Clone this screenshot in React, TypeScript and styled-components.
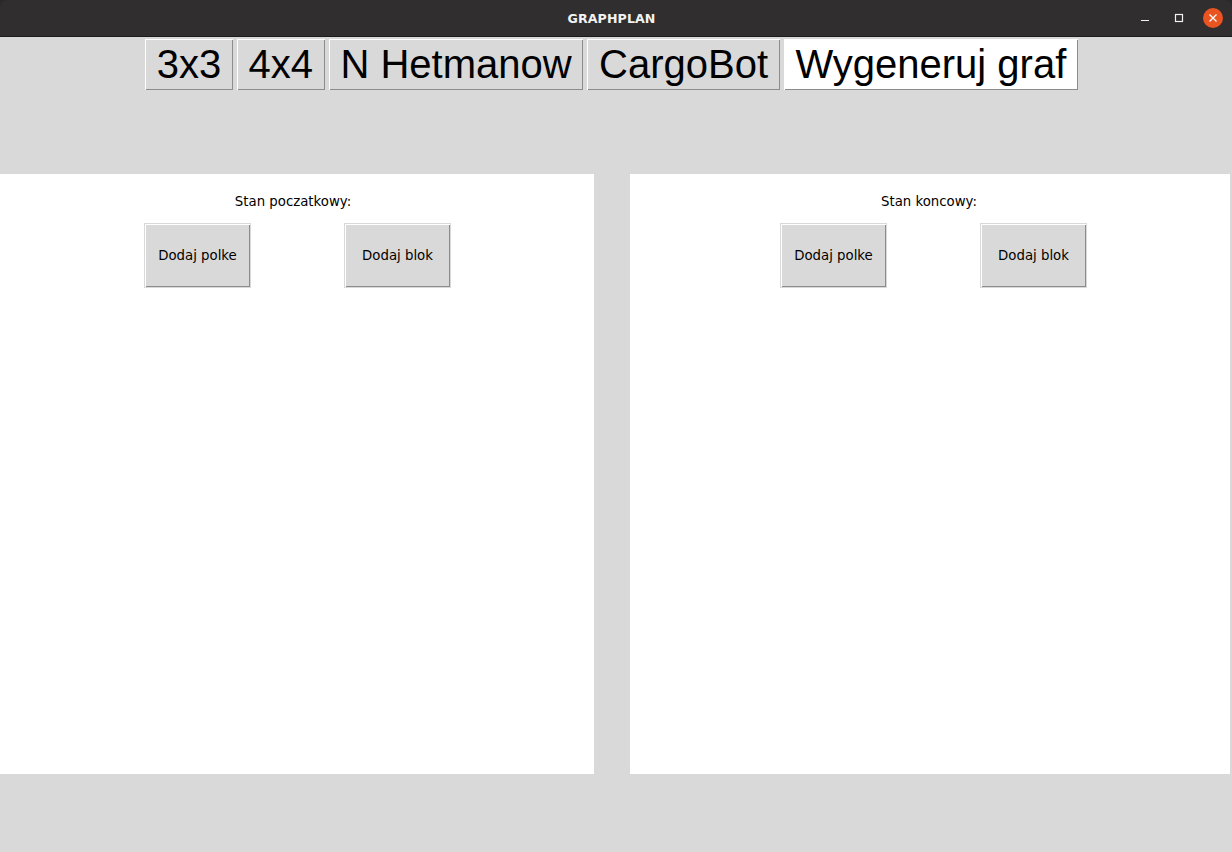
import React from 'react'
import styled, { createGlobalStyle } from 'styled-components'

const GlobalStyle = createGlobalStyle`
  html, body {
    margin: 0;
    padding: 0;
    background: #2b2a2a;
    overflow: hidden;
  }
`

const Window = styled.div`
  width: 1232px;
  height: 852px;
  display: flex;
  flex-direction: column;
  overflow: hidden;
`

const TitleBar = styled.div`
  height: 36px;
  flex-shrink: 0;
  display: grid;
  grid-template-columns: 1fr auto 1fr;
  align-items: center;
  padding-right: 9px;
  background: #302e2e;
  border-bottom: 1px solid #1c1b1b;
  border-radius: 8px 8px 0 0;
`

const Title = styled.div`
  grid-column: 2;
  font-family: 'DejaVu Sans', sans-serif;
  font-weight: bold;
  font-size: 12.6px;
  color: #f2f2f2;
  letter-spacing: 0.1px;
`

const Controls = styled.div`
  grid-column: 3;
  justify-self: end;
  display: flex;
  align-items: center;
  gap: 14px;
`

const ControlSlot = styled.div`
  width: 20px;
  height: 20px;
  display: flex;
  align-items: center;
  justify-content: center;
`

const CloseCircle = styled(ControlSlot)`
  border-radius: 50%;
  background: #e95420;
`

const Body = styled.div`
  flex: 1;
  background: #d9d9d9;
  display: flex;
  flex-direction: column;
`

const TabBar = styled.div`
  display: flex;
  justify-content: center;
  gap: 2px;
  padding: 1px 9px 0 0;
`

const RaisedButton = styled.button<{ $active?: boolean }>`
  margin: 0;
  border: 1px solid #d9d9d9;
  box-shadow: inset 1px 1px 0 #ffffff, inset -1px -1px 0 #8c8c8c;
  background: ${(p) => (p.$active ? '#ffffff' : '#d9d9d9')};
  color: #000;
  cursor: pointer;
`

const TabButton = styled(RaisedButton)`
  font-family: 'Liberation Sans', Arial, sans-serif;
  font-size: 40px;
  line-height: 46px;
  padding: 2px 11.7px 3px;
`

const Panels = styled.div`
  display: flex;
  gap: 36px;
  margin: 83px 0 0 -6px;
`

const Canvas = styled.div`
  width: 600px;
  height: 600px;
  flex-shrink: 0;
  background: #ffffff;
  display: flex;
  flex-direction: column;
  align-items: center;
  padding-top: 20px;
  box-sizing: border-box;
`

const Label = styled.div`
  font-family: 'DejaVu Sans', sans-serif;
  font-size: 13.3px;
  line-height: 15px;
  color: #000;
  padding-right: 2px;
`

const ButtonRow = styled.div`
  align-self: stretch;
  display: flex;
  gap: 93px;
  padding-left: 150px;
  margin-top: 14px;
`

const ActionButton = styled(RaisedButton)`
  width: 107px;
  height: 65px;
  padding: 0;
  font-family: 'DejaVu Sans', sans-serif;
  font-size: 13.3px;
`

const StatePanel: React.FC<{ title: string }> = ({ title }) => (
  <Canvas>
    <Label>{title}</Label>
    <ButtonRow>
      <ActionButton>Dodaj polke</ActionButton>
      <ActionButton>Dodaj blok</ActionButton>
    </ButtonRow>
  </Canvas>
)

const tabs = ['3x3', '4x4', 'N Hetmanow', 'CargoBot']

const App: React.FC = () => {
  return (
    <>
      <GlobalStyle />
      <Window>
        <TitleBar>
          <Title>GRAPHPLAN</Title>
          <Controls>
            <ControlSlot>
              <svg width="10" height="10" viewBox="0 0 10 10">
                <line x1="1" y1="7.5" x2="9" y2="7.5" stroke="#f2f2f2" strokeWidth="1" />
              </svg>
            </ControlSlot>
            <ControlSlot>
              <svg width="10" height="10" viewBox="0 0 10 10">
                <rect x="1.5" y="1.5" width="7" height="7" fill="none" stroke="#f2f2f2" strokeWidth="1.2" />
              </svg>
            </ControlSlot>
            <CloseCircle>
              <svg width="10" height="10" viewBox="0 0 10 10">
                <path d="M1.5 1.5 L8.5 8.5 M8.5 1.5 L1.5 8.5" stroke="#ffffff" strokeWidth="1.3" />
              </svg>
            </CloseCircle>
          </Controls>
        </TitleBar>
        <Body>
          <TabBar>
            {tabs.map((t) => (
              <TabButton key={t}>{t}</TabButton>
            ))}
            <TabButton $active>Wygeneruj graf</TabButton>
          </TabBar>
          <Panels>
            <StatePanel title="Stan poczatkowy:" />
            <StatePanel title="Stan koncowy:" />
          </Panels>
        </Body>
      </Window>
    </>
  )
}

export default App
